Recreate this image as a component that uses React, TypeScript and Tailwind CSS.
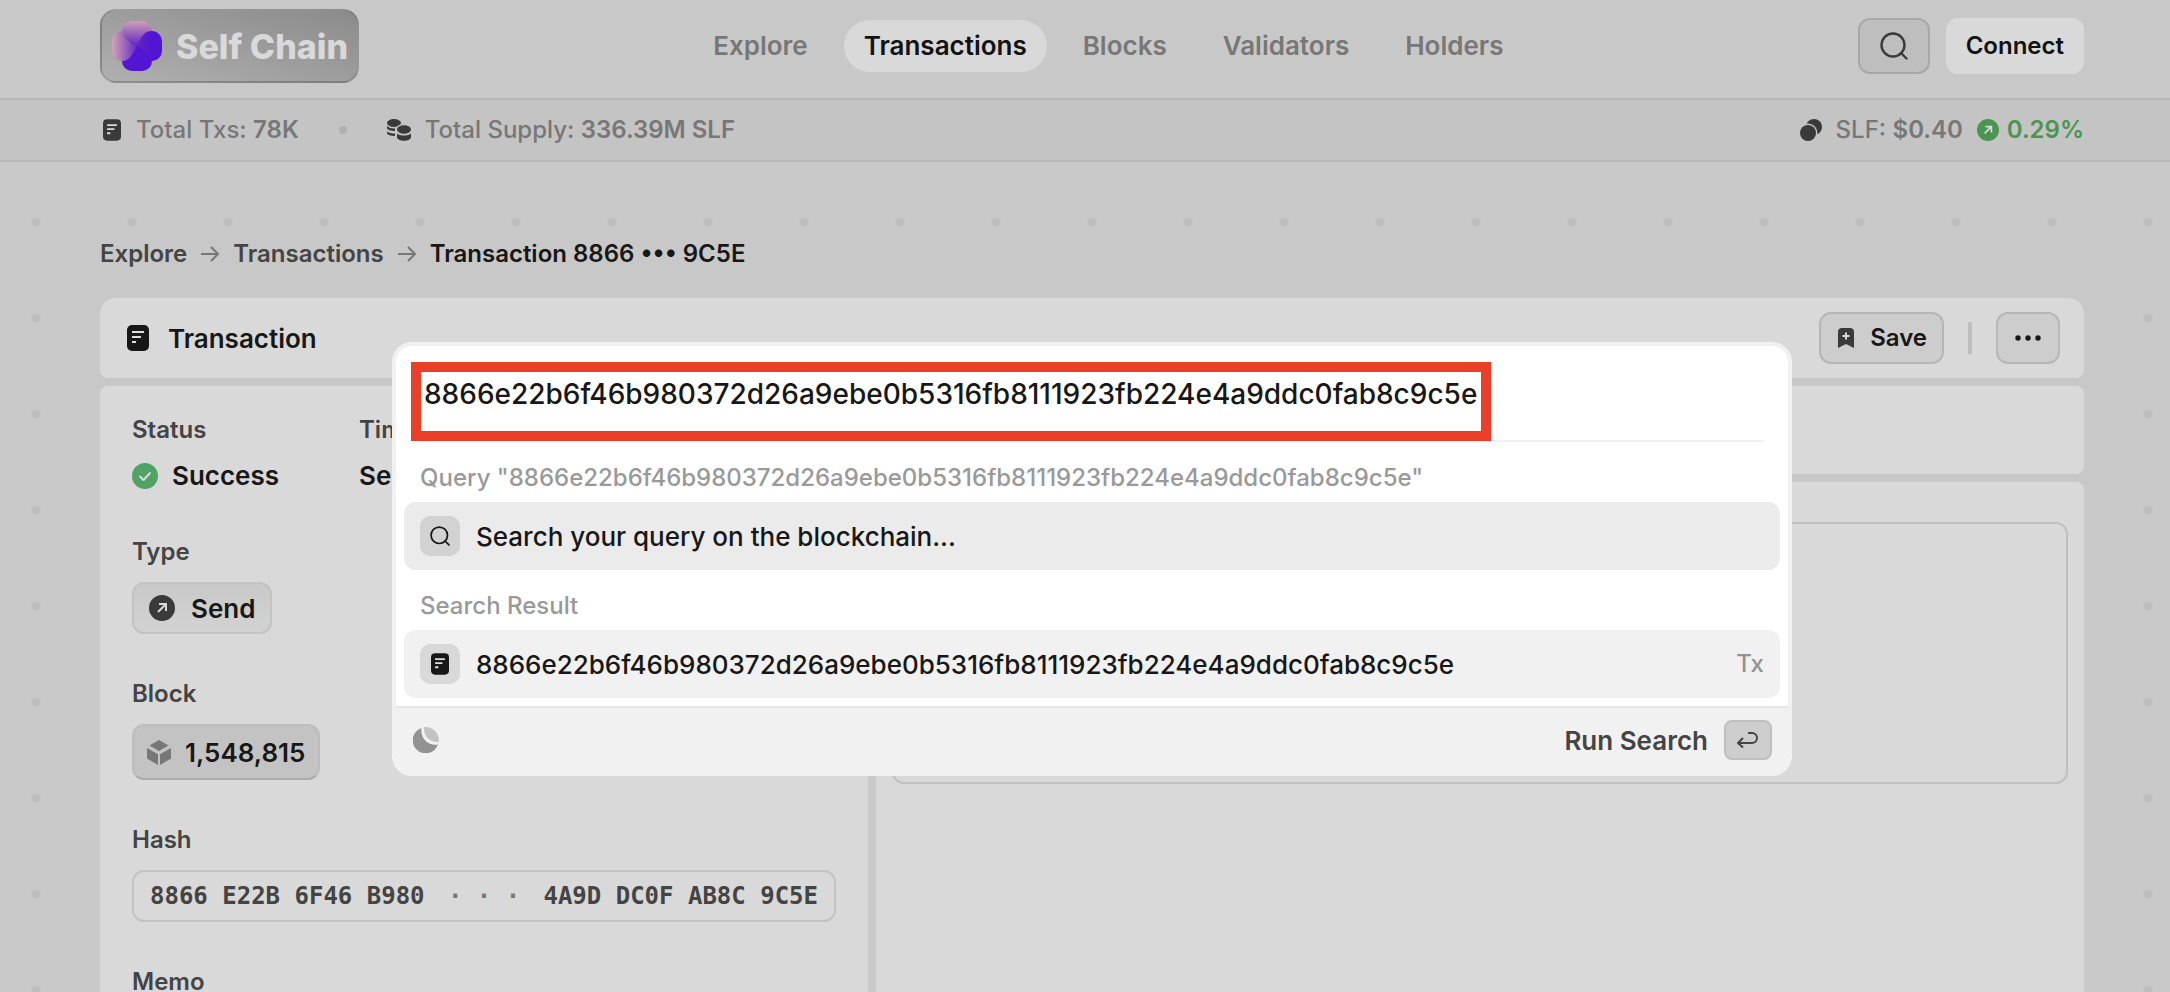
import { useState } from 'react';

const HASH = '8866e22b6f46b980372d26a9ebe0b5316fb8111923fb224e4a9ddc0fab8c9c5e';

const NAV_ITEMS = ['Explore', 'Transactions', 'Blocks', 'Validators', 'Holders'];

interface IconProps {
  className?: string;
}

const LogoMark = ({ className }: IconProps) => (
  <svg viewBox="0 0 50 50" className={className} aria-hidden="true">
    <defs>
      <linearGradient id="petalTop" x1="0" y1="0" x2="0" y2="1">
        <stop offset="0" stopColor="#cf9fb4" />
        <stop offset="0.9" stopColor="#6a30c4" />
      </linearGradient>
      <linearGradient id="petalLeft" x1="0" y1="0" x2="1" y2="0">
        <stop offset="0" stopColor="#d3a3b3" />
        <stop offset="1" stopColor="#6429c6" />
      </linearGradient>
      <linearGradient id="petalRight" x1="0" y1="0" x2="1" y2="0">
        <stop offset="0" stopColor="#6424c4" />
        <stop offset="0.6" stopColor="#5214d2" />
      </linearGradient>
    </defs>
    <rect x="10" y="20" width="30" height="30" rx="10" fill="#5314d3" />
    <path d="M10 10A10 10 0 0 0 0 20v10a10 10 0 0 0 10 10c8 0 11-7 15-15C17 21 11 17 10 10z" fill="url(#petalLeft)" />
    <path d="M20 0h10a10 10 0 0 1 10 10c-8 1-11 8-15 15-8-4-14-8-15-15A10 10 0 0 1 20 0z" fill="url(#petalTop)" />
    <path d="M40 10a10 10 0 0 1 10 10v10a10 10 0 0 1-10 10c-2-7-8-11-15-15 4-9 7-15 15-15z" fill="url(#petalRight)" />
  </svg>
);

const DocIcon = ({ className }: IconProps) => (
  <svg viewBox="0 0 22 26" className={className} aria-hidden="true">
    <rect width="22" height="26" rx="5" fill="currentColor" />
    <path d="M5 7h12M5 12h9M5 17h4" stroke="#dcdcdc" strokeWidth="2.2" fill="none" />
  </svg>
);

const CoinsIcon = ({ className }: IconProps) => (
  <svg viewBox="0 0 24 22" className={className} fill="currentColor" aria-hidden="true">
    <ellipse cx="7" cy="4" rx="7" ry="4" />
    <path d="M0 7c2 2 5 2.600 8 2.400V12C4 12 0 11 0 9zM0 12.500c2 1.500 5 2 8 2V17c-4 0-8-1-8-3z" />
    <ellipse cx="17" cy="10.500" rx="8.500" ry="5.500" fill="#c4c4c4" />
    <ellipse cx="17" cy="10.500" rx="7" ry="4.200" />
    <path d="M10 14.500c3 2.700 11 2.700 14 0V18c0 5-14 5-14 0z" />
  </svg>
);

const TokenIcon = ({ className }: IconProps) => (
  <svg viewBox="0 0 22 22" className={className} fill="currentColor" aria-hidden="true">
    <circle cx="14" cy="8" r="8" />
    <circle cx="8" cy="14" r="9.500" fill="#c4c4c4" />
    <circle cx="8" cy="14" r="8" />
  </svg>
);

const ArrowCircleIcon = ({ className }: IconProps) => (
  <svg viewBox="0 0 26 26" className={className} aria-hidden="true">
    <circle cx="13" cy="13" r="13" fill="currentColor" />
    <path d="M9 17l8-8M10 9h7v7" stroke="#d9d9d9" strokeWidth="2" fill="none" />
  </svg>
);

const CheckCircleIcon = ({ className }: IconProps) => (
  <svg viewBox="0 0 26 26" className={className} aria-hidden="true">
    <circle cx="13" cy="13" r="13" fill="currentColor" />
    <path d="M8 13.500l3.500 3.500L18 10" stroke="#d9d9d9" strokeWidth="2" strokeLinecap="round" strokeLinejoin="round" fill="none" />
  </svg>
);

const CubeIcon = ({ className }: IconProps) => (
  <svg viewBox="0 0 24 25" className={className} fill="currentColor" aria-hidden="true">
    <path d="M12 0l9.500 5.500L12 11 2.500 5.500zM0 8l11 6.200V25L0 18.500zM24 8l-11 6.200V25l11-6.500z" />
  </svg>
);

const BookmarkIcon = ({ className }: IconProps) => (
  <svg viewBox="0 0 16 20" className={className} aria-hidden="true">
    <path d="M4 0h8a4 4 0 0 1 4 4v16l-8-4-8 4V4a4 4 0 0 1 4-4z" fill="currentColor" />
    <path d="M8 4.500v7M4.500 8h7" stroke="#d9d9d9" strokeWidth="2" />
  </svg>
);

const DotsIcon = ({ className }: IconProps) => (
  <svg viewBox="0 0 26 6" className={className} fill="currentColor" aria-hidden="true">
    <circle cx="3" cy="3" r="2.700" />
    <circle cx="13" cy="3" r="2.700" />
    <circle cx="23" cy="3" r="2.700" />
  </svg>
);

const SearchIcon = ({ className }: IconProps) => (
  <svg viewBox="0 0 28 28" className={className} fill="none" stroke="currentColor" strokeWidth="2.400" strokeLinecap="round" aria-hidden="true">
    <circle cx="13" cy="13" r="11.500" />
    <path d="M21 21l5.500 5.500" />
  </svg>
);

const ArrowRightIcon = ({ className }: IconProps) => (
  <svg viewBox="0 0 18 18" className={className} fill="none" stroke="currentColor" strokeWidth="2" aria-hidden="true">
    <path d="M0 9h16M10 2l7 7-7 7" />
  </svg>
);

const MoonIcon = ({ className }: IconProps) => (
  <svg viewBox="0 0 26 26" className={className} aria-hidden="true">
    <path d="M8.500 1A13 13 0 1 0 25 17.500C15 19 7 11 8.500 1z" fill="#929292" />
    <path d="M11 0.200A13 13 0 0 1 25.700 15C17 16 10 9 11 0.200z" fill="#c3c3c3" />
  </svg>
);

const ReturnIcon = ({ className }: IconProps) => (
  <svg viewBox="0 0 22 16" className={className} fill="none" stroke="currentColor" strokeWidth="2" strokeLinejoin="round" aria-hidden="true">
    <path d="M11 1h4a5 5 0 0 1 0 10H2M6 6l-5 5 5 4.500" />
  </svg>
);

const Header = () => (
  <header className="flex h-[100px] shrink-0 items-center justify-between border-b-2 border-[#b9b9b9] pr-[86px] pb-1.5 pl-[100px]">
    <a
      href="#"
      className="flex h-[74px] w-[259px] items-center gap-3.5 rounded-2xl border-2 border-black/10 bg-gradient-to-tr from-[#b0b0b0] to-[#8b8b8b] pl-2.5 whitespace-nowrap"
    >
      <LogoMark className="size-[50px] shrink-0" />
      <span className="text-[34px] font-extrabold text-[#d9d9d9]">Self Chain</span>
    </a>
    <nav className="flex gap-4">
      {NAV_ITEMS.map((item) => (
        <a
          key={item}
          href="#"
          className={
            item === 'Transactions'
              ? 'rounded-full bg-[#d9d9d9] px-5 py-2 text-[26px] leading-9 font-semibold text-[#111]'
              : 'rounded-full px-5 py-2 text-[26px] leading-9 font-semibold text-[#777]'
          }
        >
          {item}
        </a>
      ))}
    </nav>
    <div className="flex gap-4">
      <button
        aria-label="Search"
        className="flex h-14 w-[72px] items-center justify-center rounded-xl border-2 border-[#a8a8a8] bg-[#bebebe] text-[#3a3a3a]"
      >
        <SearchIcon className="size-7" />
      </button>
      <button className="h-14 rounded-xl bg-[#d9d9d9] px-5 text-2xl font-semibold text-[#111]">Connect</button>
    </div>
  </header>
);

const StatsBar = () => (
  <div className="flex h-[62px] shrink-0 items-center justify-between border-b-2 border-[#b9b9b9] bg-[#c4c4c4] pr-[86px] pl-[103px] text-2xl font-medium text-[#777]">
    <div className="flex items-center">
      <DocIcon className="mr-[15px] h-[22px] w-[18px] text-[#3a3a3a]" />
      <span>
        Total Txs: <span className="font-semibold">78K</span>
      </span>
      <span className="mx-10 size-2 rounded-full bg-[#b0b0b0]" />
      <CoinsIcon className="mr-3.5 h-[22px] w-6 text-[#3a3a3a]" />
      <span>
        Total Supply: <span className="font-semibold">336.39M SLF</span>
      </span>
    </div>
    <div className="flex items-center">
      <TokenIcon className="mr-3.5 size-[22px] text-[#3a3a3a]" />
      <span>
        SLF: <span className="font-semibold">$0.40</span>
      </span>
      <ArrowCircleIcon className="mr-2 ml-3.5 size-[22px] text-[#4a9552]" />
      <span className="font-semibold text-[#4a9552]">0.29%</span>
    </div>
  </div>
);

const Breadcrumbs = () => (
  <nav aria-label="Breadcrumb" className="flex items-center gap-3.5 text-2xl font-semibold text-[#444]">
    <a href="#">Explore</a>
    <ArrowRightIcon className="size-[18px] text-[#777]" />
    <a href="#">Transactions</a>
    <ArrowRightIcon className="size-[18px] text-[#777]" />
    <span className="text-[#171717]">Transaction 8866 ••• 9C5E</span>
  </nav>
);

const Field = ({ label, children }: { label: string; children?: React.ReactNode }) => (
  <div className="flex flex-col items-start gap-3.5">
    <div className="text-2xl leading-8 font-semibold text-[#444]">{label}</div>
    {children}
  </div>
);

const Details = () => (
  <section className="flex w-[768px] shrink-0 flex-col gap-11 rounded-t-lg bg-[#d9d9d9] px-8 pt-7">
    <div className="flex">
      <div className="w-[227px]">
        <Field label="Status">
          <div className="flex items-center gap-3.5 text-[26px] leading-8 font-semibold text-[#171717]">
            <CheckCircleIcon className="size-[26px] text-[#50a265]" />
            Success
          </div>
        </Field>
      </div>
      <Field label="Time">
        <div className="text-[26px] leading-8 font-semibold text-[#171717]">Sep</div>
      </Field>
    </div>
    <Field label="Type">
      <div className="flex h-[52px] items-center gap-4 rounded-xl border-2 border-[#c3c3c3] bg-gradient-to-b from-[#c9c9c9] to-[#d2d2d2] px-[15px] text-[26px] font-semibold text-[#171717]">
        <ArrowCircleIcon className="size-[26px] text-[#3a3a3a]" />
        Send
      </div>
    </Field>
    <Field label="Block">
      <button className="flex h-14 items-center gap-3.5 rounded-xl border-2 border-[#bdbdbd] border-b-[#ababab] bg-[#c3c3c3] px-[13px] text-[26px] font-semibold text-[#171717]">
        <CubeIcon className="h-[25px] w-6 text-[#777]" />
        1,548,815
      </button>
    </Field>
    <Field label="Hash">
      <div className="flex h-[52px] w-full items-center justify-between rounded-xl border-2 border-[#c3c3c3] px-4 font-['DejaVu_Sans_Mono',monospace] text-2xl font-bold whitespace-nowrap text-[#444]">
        <span>8866 E22B 6F46 B980</span>
        <span className="text-[#777]">· · ·</span>
        <span>4A9D DC0F AB8C 9C5E</span>
      </div>
    </Field>
    <Field label="Memo" />
  </section>
);

const SearchDialog = () => {
  const [query, setQuery] = useState(HASH);

  return (
    <div className="absolute inset-0 flex items-start justify-center pt-[342px] pr-[86px] pl-[100px]">
      <div
        role="dialog"
        aria-label="Search"
        className="w-full max-w-[1400px] overflow-hidden rounded-[20px] border-4 border-[#f1f1f1] bg-white"
      >
        <div className="mx-6 h-24 border-b-2 border-[#f1f1f1] pt-4">
          <div className="-ml-[9px] w-[1080px] border-10 border-[#eb4027] bg-white">
            <input
              type="text"
              aria-label="Search query"
              value={query}
              onChange={(e) => setQuery(e.target.value)}
              className="block h-[59px] w-full pb-4 pl-[3px] text-[28px] font-medium text-[#171717] outline-none"
            />
          </div>
        </div>

        <div className="px-2 pb-2">
          <div className="px-4 pt-5 pb-2 text-2xl leading-8 font-medium text-[#999]">Query "{query}"</div>
          <button className="flex h-[68px] w-full items-center gap-4 rounded-xl bg-[#ebebeb] px-4 text-[26px] font-medium text-[#171717]">
            <span className="flex size-10 items-center justify-center rounded-[10px] bg-[#d2d2d2]">
              <SearchIcon className="size-5" />
            </span>
            Search your query on the blockchain...
          </button>
          <div className="px-4 pt-5 pb-2 text-2xl leading-8 font-medium text-[#999]">Search Result</div>
          <button className="flex h-[68px] w-full items-center gap-4 rounded-xl bg-[#f1f1f1] px-4 text-[26px] font-medium text-[#171717]">
            <span className="flex size-10 items-center justify-center rounded-[10px] bg-[#d9d9d9]">
              <DocIcon className="h-[22px] w-[18px]" />
            </span>
            {HASH}
            <span className="ml-auto text-2xl text-[#929292]">Tx</span>
          </button>
        </div>

        <div className="flex h-[66px] items-center justify-between border-t-2 border-[#e5e5e5] bg-[#f1f1f1] pr-4 pl-[17px]">
          <MoonIcon className="size-[26px]" />
          <button className="flex items-center gap-4 text-[26px] font-semibold text-[#444]">
            Run Search
            <kbd className="flex h-10 w-12 items-center justify-center rounded-lg border-2 border-[#bfbfbf] bg-[#cdcdcd]">
              <ReturnIcon className="h-4 w-[22px]" />
            </kbd>
          </button>
        </div>
      </div>
    </div>
  );
};

export default function App() {
  return (
    <div className="relative flex h-screen flex-col overflow-hidden bg-[#c8c8c8] font-[Inter,sans-serif]">
      <Header />
      <StatsBar />
      <main className="flex grow flex-col bg-[radial-gradient(circle,#bebebe_4px,transparent_5px)] bg-[size:96px_96px] bg-[position:-12px_12px] pt-[76px] pr-[86px] pl-[100px]">
        <Breadcrumbs />
        <div className="mt-7 flex h-20 shrink-0 items-center rounded-t-2xl rounded-b-lg bg-[#d9d9d9] pr-6 pl-[27px]">
          <DocIcon className="mr-[19px] h-[26px] w-[22px] text-[#171717]" />
          <h1 className="text-[26px] font-semibold text-[#171717]">Transaction</h1>
          <button className="ml-auto flex h-[52px] items-center gap-4 rounded-xl border-2 border-[#b6b6b6] bg-[#cdcdcd] pr-[15px] pl-[17px] text-2xl font-semibold text-[#171717]">
            <BookmarkIcon className="h-5 w-4 text-[#3a3a3a]" />
            Save
          </button>
          <span className="mx-6 h-8 w-1 bg-[#bfbfbf]" />
          <button
            aria-label="More"
            className="flex h-[52px] w-16 items-center justify-center rounded-xl border-2 border-[#b6b6b6] bg-[#cdcdcd] text-[#171717]"
          >
            <DotsIcon className="h-1.5 w-[26px]" />
          </button>
        </div>
        <div className="mt-2 flex grow gap-2 bg-[#c8c8c8]">
          <Details />
          <div className="flex grow flex-col gap-2">
            <section className="h-[88px] shrink-0 rounded-lg bg-[#d9d9d9]" />
            <section className="grow rounded-t-lg bg-[#d9d9d9] px-4 pt-10">
              <div className="h-[262px] rounded-xl border-2 border-[#c0c0c0]" />
            </section>
          </div>
        </div>
      </main>
      <SearchDialog />
    </div>
  );
}
